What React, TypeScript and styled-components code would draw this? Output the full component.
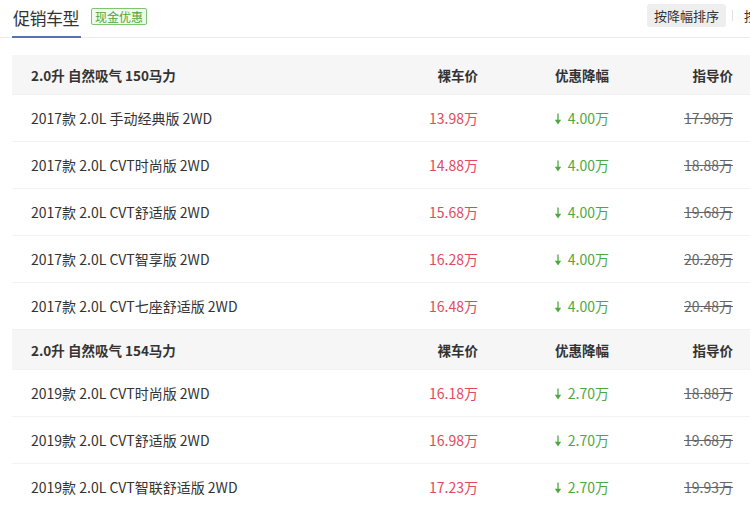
import React from "react";
import styled, { createGlobalStyle } from "styled-components";

const Global = createGlobalStyle`
  html, body { margin: 0; padding: 0; background: #fff; }
  body { font-family: "Noto Sans CJK SC", "Noto Sans", sans-serif; color: #333; }
`;

const Page = styled.div`
  width: 750px;
  height: 508px;
  overflow: hidden;
  background: #fff;
`;

const TopBar = styled.div`
  display: flex;
  align-items: flex-end;
  border-bottom: 1px solid #ececec;
  padding-left: 12px;
  box-sizing: border-box;
  height: 38px;
`;

const Tab = styled.div`
  font-size: 17px;
  line-height: 22px;
  color: #333;
  padding: 0 2px 0 1px;
  height: 36px;
  box-sizing: border-box;
  padding-top: 5px;
  border-bottom: 2px solid #5573b3;
  margin-bottom: -1px;
  width: 69px;
  letter-spacing: -0.5px;
`;

const Badge = styled.span`
  align-self: flex-start;
  margin-top: 8px;
  margin-left: 10px;
  height: 17px;
  box-sizing: border-box;
  padding: 0 3px;
  font-size: 12px;
  line-height: 15px;
  color: #4ea43c;
  border: 1px solid #7fc56d;
  background: #f1faee;
  border-radius: 2px;
`;

const Spacer = styled.div`
  flex: 1;
`;

const Sorts = styled.div`
  align-self: flex-start;
  margin-top: 4px;
  display: flex;
  align-items: center;
  white-space: nowrap;
  margin-right: -66px;
`;

const SortButton = styled.span<{ $active?: boolean }>`
  font-size: 13px;
  line-height: 23px;
  height: 23px;
  padding: 0 7px;
  border-radius: 3px;
  color: #333;
  background: ${(p) => (p.$active ? "#eeeeee" : "transparent")};
`;

const Divider = styled.span`
  width: 1px;
  height: 11px;
  background: #e0e0e0;
  margin: 0 4px 0 6px;
`;

const Table = styled.div`
  margin: 17px 0 0 12px;
  width: 738px;
`;

const Row = styled.div<{ $head?: boolean }>`
  display: grid;
  grid-template-columns: 337px 110px 131px 124px;
  align-items: center;
  padding: 0 17px 0 19px;
  height: ${(p) => (p.$head ? "40px" : "47px")};
  background: ${(p) => (p.$head ? "#f6f6f6" : "#fff")};
  border-bottom: 1px solid #f2f2f2;
  box-sizing: border-box;
  font-size: ${(p) => (p.$head ? "13.5px" : "14px")};
  font-weight: ${(p) => (p.$head ? 700 : 400)};
  color: #333;
`;

const Name = styled.div`
  white-space: nowrap;
`;

const Cell = styled.div<{ $tone?: "red" | "green" | "strike" }>`
  text-align: right;
  white-space: nowrap;
  color: ${(p) =>
    p.$tone === "red" ? "#df4a5e" : p.$tone === "green" ? "#4ea842" : p.$tone === "strike" ? "#666" : "#333"};
  text-decoration: ${(p) => (p.$tone === "strike" ? "line-through" : "none")};
`;

const Arrow = styled.svg`
  width: 8px;
  height: 12px;
  margin-right: 6px;
  vertical-align: -1px;
`;

const DownArrow = () => (
  <Arrow viewBox="0 0 8 12">
    <path d="M4 0.5 V8" stroke="#4ea842" strokeWidth="1.3" />
    <path d="M0.8 6.8 L4 11.5 L7.2 6.8 Z" fill="#4ea842" />
  </Arrow>
);

type Item = { name: string; price: string; off: string; guide: string };
type Group = { title: string; items: Item[] };

const groups: Group[] = [
  {
    title: "2.0升 自然吸气 150马力",
    items: [
      { name: "2017款 2.0L 手动经典版 2WD", price: "13.98万", off: "4.00万", guide: "17.98万" },
      { name: "2017款 2.0L CVT时尚版 2WD", price: "14.88万", off: "4.00万", guide: "18.88万" },
      { name: "2017款 2.0L CVT舒适版 2WD", price: "15.68万", off: "4.00万", guide: "19.68万" },
      { name: "2017款 2.0L CVT智享版 2WD", price: "16.28万", off: "4.00万", guide: "20.28万" },
      { name: "2017款 2.0L CVT七座舒适版 2WD", price: "16.48万", off: "4.00万", guide: "20.48万" },
    ],
  },
  {
    title: "2.0升 自然吸气 154马力",
    items: [
      { name: "2019款 2.0L CVT时尚版 2WD", price: "16.18万", off: "2.70万", guide: "18.88万" },
      { name: "2019款 2.0L CVT舒适版 2WD", price: "16.98万", off: "2.70万", guide: "19.68万" },
      { name: "2019款 2.0L CVT智联舒适版 2WD", price: "17.23万", off: "2.70万", guide: "19.93万" },
    ],
  },
];

export default function App() {
  return (
    <Page>
      <Global />
      <TopBar>
        <Tab>促销车型</Tab>
        <Badge>现金优惠</Badge>
        <Spacer />
        <Sorts>
          <SortButton $active>按降幅排序</SortButton>
          <Divider />
          <SortButton>按价格排序</SortButton>
        </Sorts>
      </TopBar>
      <Table>
        {groups.map((g) => (
          <React.Fragment key={g.title}>
            <Row $head>
              <Name>{g.title}</Name>
              <Cell>裸车价</Cell>
              <Cell>优惠降幅</Cell>
              <Cell>指导价</Cell>
            </Row>
            {g.items.map((it) => (
              <Row key={it.name}>
                <Name>{it.name}</Name>
                <Cell $tone="red">{it.price}</Cell>
                <Cell $tone="green">
                  <DownArrow />
                  {it.off}
                </Cell>
                <Cell $tone="strike">{it.guide}</Cell>
              </Row>
            ))}
          </React.Fragment>
        ))}
      </Table>
    </Page>
  );
}
